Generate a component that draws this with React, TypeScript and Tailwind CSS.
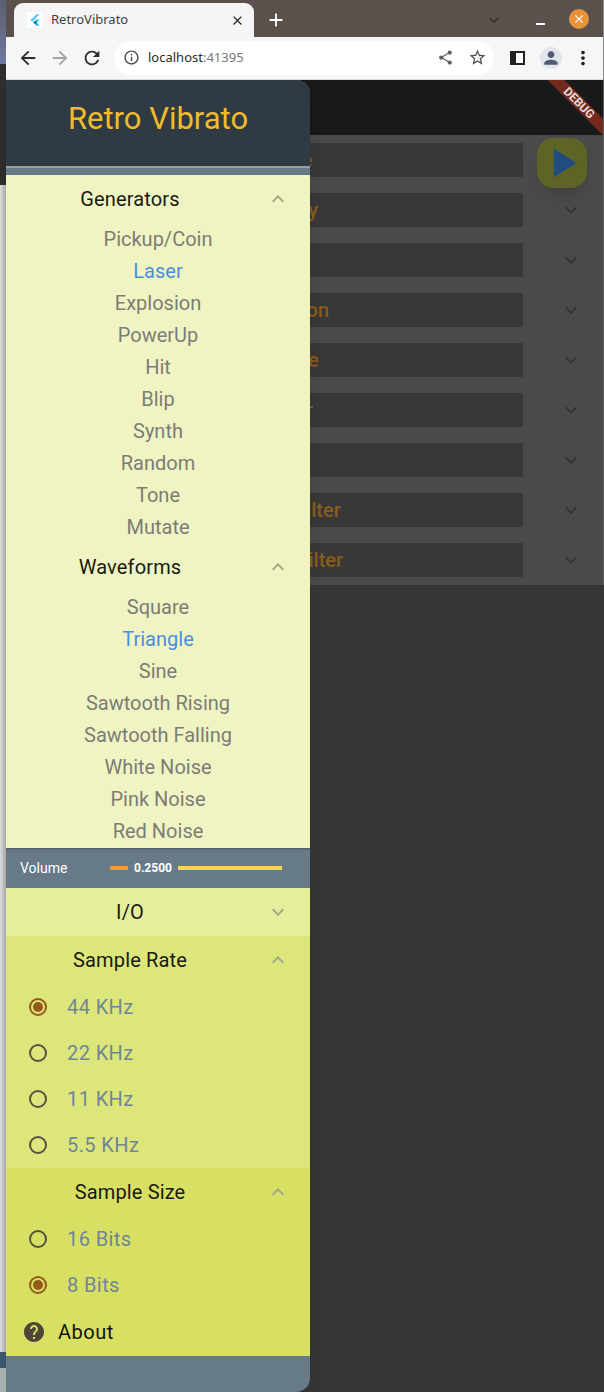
import { MdAdd, MdArrowBack, MdArrowForward, MdClose, MdExpandLess, MdExpandMore, MdHelp, MdInfoOutline, MdMoreVert, MdPerson, MdPlayArrow, MdRefresh, MdShare, MdStarBorder } from "react-icons/md";

const generators = ["Pickup/Coin", "Laser", "Explosion", "PowerUp", "Hit", "Blip", "Synth", "Random", "Tone", "Mutate"];
const waveforms = ["Square", "Triangle", "Sine", "Sawtooth Rising", "Sawtooth Falling", "White Noise", "Pink Noise", "Red Noise"];
const panels = ["Envelope", "Frequency", "Vibrato", "Arpeggiation", "Duty Cycle", "Retrigger", "Flanger", "Low-Pass Filter", "High-Pass Filter"];

const ListHeader = ({ title, open = true }: { title: string; open?: boolean }) => (
  <div className="flex h-12 items-center">
    <span className="w-[248px] text-center text-[20px] tracking-[0.15px] text-[#1a1a12]">{title}</span>
    {open ? <MdExpandLess className="ml-[12px] text-[#a3a88a]" size={24} /> : <MdExpandMore className="ml-[12px] text-[#a3a88a]" size={24} />}
  </div>
);

const MenuItem = ({ label, active }: { label: string; active?: boolean }) => (
  <div className={`flex h-8 items-center justify-center text-[20px] ${active ? "text-[#4a8fdc]" : "text-[#7c7d76]"}`}>{label}</div>
);

const RadioRow = ({ label, checked }: { label: string; checked?: boolean }) => (
  <div className="flex h-[46px] items-center pl-[23px]">
    <span className={`flex h-[18px] w-[18px] items-center justify-center rounded-full border-2 ${checked ? "border-[#94591a]" : "border-[#57503f]"}`}>
      {checked && <span className="h-[10px] w-[10px] rounded-full bg-[#94591a]" />}
    </span>
    <span className="ml-[20px] text-[20px] tracking-[0.4px] text-[#6f8599]">{label}</span>
  </div>
);

export default function App() {
  return (
    <div className="flex h-[1392px] w-[604px] overflow-hidden bg-[#363636] font-['Roboto',sans-serif]">
      {/* desktop behind the window */}
      <div className="flex w-[6px] flex-col">
        <div className="h-[64px] bg-gradient-to-b from-[#5b5f72] to-[#6f79a0]" />
        <div className="h-[121px] bg-[#2e2e2e]" />
        <div className="h-[1167px] bg-gradient-to-r from-[#e2e2e2] to-[#aeaeae]" />
        <div className="h-[16px] bg-[#3d5a70]" />
        <div className="flex-1 bg-[#a9b6b2]" />
      </div>

      <div className="flex w-[597px] flex-col">
        {/* tab strip */}
        <div className="flex h-[37px] bg-[#5a514c] pl-[8px] pt-[3px]">
          <div className="flex h-[34px] w-[240px] items-center rounded-t-[9px] bg-[#f5f5f5] pl-[13px] pr-[9px]">
            <span className="flex h-4 w-4 items-center justify-center bg-white">
              <svg viewBox="0 0 16 16" className="h-[14px] w-[14px]">
                <path d="M9.5 1.5 3 8l1.9 1.9 8.4-8.4z" fill="#54c5f8" />
                <path d="M9.5 7.5 6.2 10.8l3.3 3.7h3.8l-3.4-3.6 3.4-3.4z" fill="#29b6f6" />
                <path d="m6.2 10.8 1.8-1.8 1.9 1.9-1.9 1.8z" fill="#01579b" />
              </svg>
            </span>
            <span className="ml-[8px] flex-1 font-['Noto_Sans',sans-serif] text-[13px] text-[#3c4043]">RetroVibrato</span>
            <MdClose className="text-[#2a2a2a]" size={15} />
          </div>
          <MdAdd className="ml-[11px] mt-[6px] text-white" size={22} />
          <MdExpandMore className="ml-[197px] mt-[7px] text-[#38322e]" size={20} />
          <span className="ml-[32px] mt-[20px] h-[2px] w-[9px] bg-white" />
          <span className="ml-[24px] mt-[6px] flex h-5 w-5 items-center justify-center rounded-full bg-[#e8923a]">
            <MdClose className="text-white" size={14} />
          </span>
        </div>

        {/* toolbar */}
        <div className="flex h-[43px] items-center border-b border-[#dcdcdc] bg-[#f6f6f6] pl-[11px] pb-[1px]">
          <MdArrowBack className="text-[#2c2c2c]" size={22} />
          <MdArrowForward className="ml-[10px] text-[#a3a3a3]" size={22} />
          <MdRefresh className="ml-[10px] text-[#2c2c2c]" size={22} />
          <div className="ml-[11px] flex h-[34px] w-[380px] items-center rounded-full bg-white pl-[9px] pr-[7px]">
            <MdInfoOutline className="text-[#4a4a4a]" size={17} />
            <span className="ml-[8px] flex-1 font-['Noto_Sans',sans-serif] text-[13px] text-[#2c2c2c]">
              localhost<span className="text-[#77777a]">:41395</span>
            </span>
            <MdShare className="text-[#5f5f5f]" size={17} />
            <MdStarBorder className="ml-[14px] text-[#4f4f4f]" size={19} />
          </div>
          <span className="ml-[16px] flex h-[14px] w-[15px] justify-end border-2 border-[#202124] bg-[#202124]">
            <span className="h-full w-[7px] bg-white" />
          </span>
          <span className="ml-[15px] flex h-[22px] w-[22px] items-center justify-center rounded-full bg-[#e1e4ea]">
            <MdPerson className="text-[#505a70]" size={20} />
          </span>
          <MdMoreVert className="ml-[10px] text-[#202124]" size={22} />
        </div>

        {/* app page, dimmed by the open drawer */}
        <div className="relative flex-1">
          <div className="h-[55px] bg-[#191919]" />
          <div className="flex h-[450px] flex-col gap-4 bg-[#4a4a4a] pb-2 pl-[14px] pt-2">
            {panels.map((name, index) => (
              <div key={name} className="flex h-[34px] items-center">
                <div className="flex h-[34px] w-[503px] items-center justify-center bg-[#383838] text-[20px] font-medium text-[#8a5c1c]">{name}</div>
                {index > 0 && <MdExpandMore className="ml-[36px] text-[#353535]" size={24} />}
              </div>
            ))}
          </div>

          {/* play button */}
          <div className="absolute left-[531px] top-[58px] flex h-[50px] w-[50px] items-center justify-center rounded-[16px] bg-[#5f6426] shadow-lg">
            <MdPlayArrow className="text-[#1f4d7f]" size={50} />
          </div>

          {/* debug ribbon */}
          <div className="absolute right-0 top-0 h-[55px] w-[60px] overflow-hidden">
            <div className="absolute left-[-14px] top-[17px] h-[12px] w-[100px] rotate-45 bg-[#722a1f] text-center text-[12px] font-bold leading-[12px] text-[#e6dcd8]">DEBUG</div>
          </div>

          {/* drawer */}
          <div className="absolute inset-y-0 left-0 flex w-[304px] flex-col overflow-hidden rounded-r-[14px] bg-[#667a87] shadow-xl">
            <div className="flex h-[86px] items-center justify-center bg-[#2f3a42] pb-2 text-[31px] text-[#f2bb2c]">Retro Vibrato</div>
            <div className="h-[2px] bg-[#9e9e9e]" />
            <div className="h-[7px]" />
            <div className="h-[673px] bg-[#f0f4c3] shadow-[0_1px_2px_rgba(0,0,0,0.3)]">
              <ListHeader title="Generators" />
              {generators.map((item) => (
                <MenuItem key={item} label={item} active={item === "Laser"} />
              ))}
              <ListHeader title="Waveforms" />
              {waveforms.map((item) => (
                <MenuItem key={item} label={item} active={item === "Triangle"} />
              ))}
            </div>
            <div className="flex h-10 items-center pl-[14px] text-white">
              <span className="w-[90px] text-[14px]">Volume</span>
              <span className="h-1 w-[18px] bg-[#f29a2e]" />
              <span className="mx-[6px] text-[12px] font-bold">0.2500</span>
              <span className="h-1 w-[104px] bg-[#fdd250]" />
            </div>
            <div className="bg-[#e6ee9c]">
              <ListHeader title="I/O" open={false} />
            </div>
            <div className="bg-[#dde67a]">
              <ListHeader title="Sample Rate" />
              <RadioRow label="44 KHz" checked />
              <RadioRow label="22 KHz" />
              <RadioRow label="11 KHz" />
              <RadioRow label="5.5 KHz" />
            </div>
            <div className="bg-[#d7e063]">
              <ListHeader title="Sample Size" />
              <RadioRow label="16 Bits" />
              <RadioRow label="8 Bits" checked />
              <div className="flex h-12 items-center pl-[16px]">
                <MdHelp className="text-[#4f4638]" size={24} />
                <span className="ml-[12px] text-[20px] tracking-[0.5px] text-[#14140c]">About</span>
              </div>
            </div>
          </div>
        </div>
      </div>

      {/* sliver of whatever sits right of the window */}
      <div className="flex w-px flex-col">
        <div className="h-[80px] bg-[#8a8a8a]" />
        <div className="h-[505px] bg-[#5c5c5c]" />
        <div className="flex-1 bg-[#363636]" />
      </div>
    </div>
  );
}
